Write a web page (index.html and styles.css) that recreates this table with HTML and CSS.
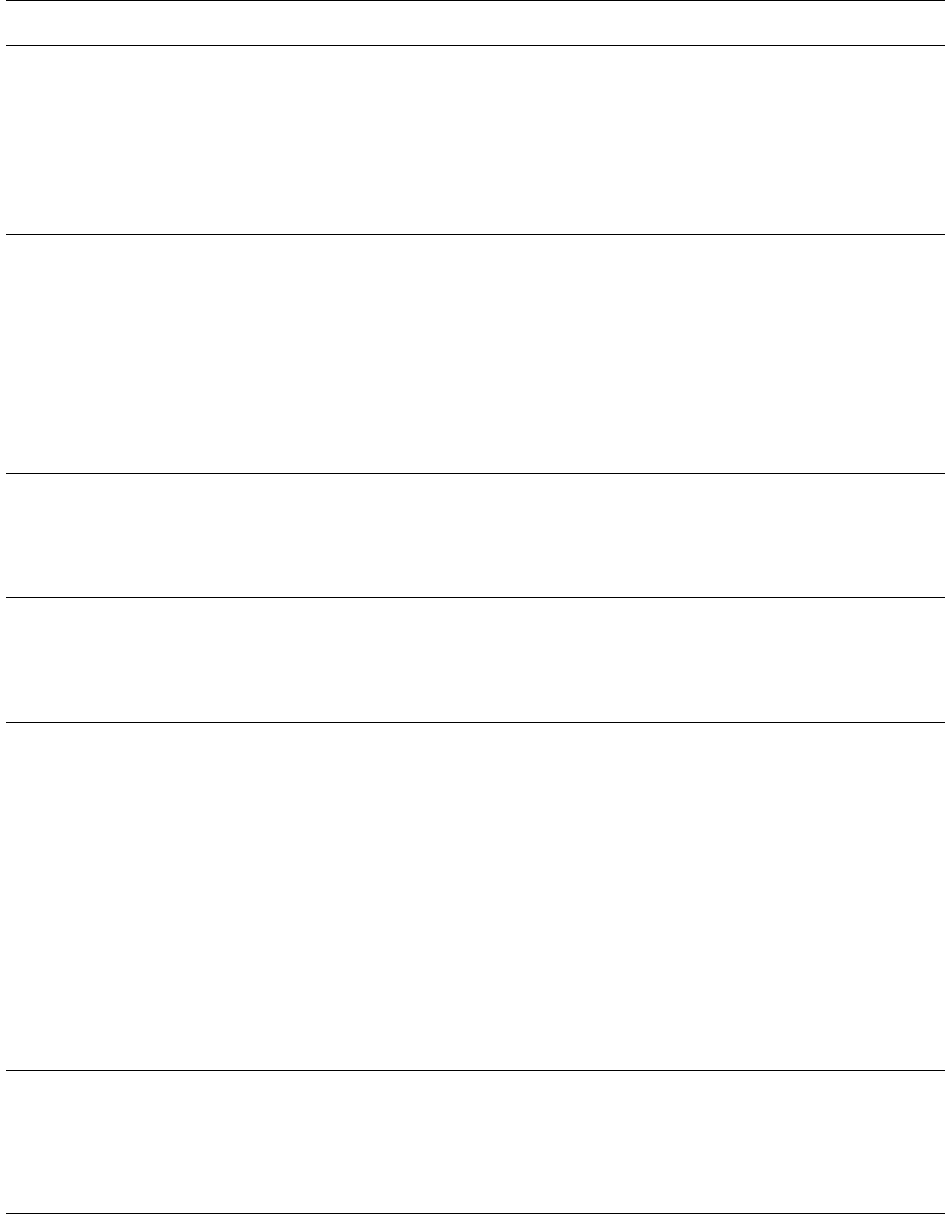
FILE: index.html
```html
<!DOCTYPE html>
<html lang="en">
<head>
    <meta charset="UTF-8">
    <meta name="viewport" content="width=device-width, initial-scale=1.0">
    <title>Sections</title>
    <link rel="stylesheet" href="styles.css">
</head>
<body>
    <div class="sheet">
        <div class="row row-head"></div>
        <div class="row row-a"></div>
        <div class="row row-b"></div>
        <div class="row row-c"></div>
        <div class="row row-d"></div>
        <div class="row row-e"></div>
        <div class="row row-f"></div>
    </div>
</body>
</html>
```

FILE: styles.css
```css
body {
    font-family: "Liberation Sans", Arial, sans-serif;
    margin: 0;
    padding: 0 0 0 6px;
    background-color: white;
}
.sheet {
    display: flex;
    flex-direction: column;
    border-bottom: 1px solid #000;
}
.row {
    box-sizing: border-box;
    border-top: 1px solid #000;
}
.row-head { height: 45px; }
.row-a { height: 189px; }
.row-b { height: 239px; }
.row-c { height: 124px; }
.row-d { height: 125px; }
.row-e { height: 348px; }
.row-f { height: 143px; }
```
